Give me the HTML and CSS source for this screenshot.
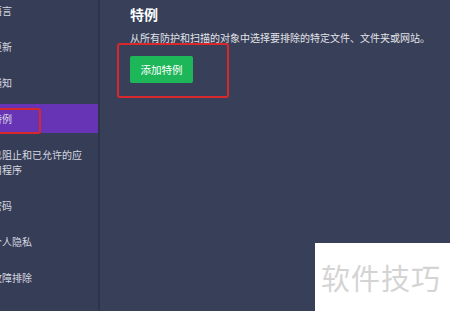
FILE: index.html
```html
<!DOCTYPE html>
<html lang="zh-CN">
<head>
<meta charset="UTF-8">
<title>特例</title>
<link rel="stylesheet" href="styles.css">
</head>
<body>
<div class="app">
  <div class="sidebar">
    <div class="nav-item">语言</div>
    <div class="nav-item">更新</div>
    <div class="nav-item">通知</div>
    <div class="nav-item active">特例</div>
    <div class="nav-item">已阻止和已允许的应<br>用程序</div>
    <div class="nav-item">密码</div>
    <div class="nav-item">个人隐私</div>
    <div class="nav-item">故障排除</div>
    <div class="mark mark-side"></div>
  </div>
  <div class="main">
    <h2 class="title">特例</h2>
    <p class="desc">从所有防护和扫描的对象中选择要排除的特定文件、文件夹或网站。</p>
    <button class="add-btn">添加特例</button>
    <div class="mark mark-main"></div>
  </div>
</div>
<div class="watermark">软件技巧</div>
</body>
</html>
```
FILE: styles.css
```css
body { margin: 0; background: #383f58; font-family: "Noto Sans CJK SC", "Noto Sans", sans-serif; overflow: hidden; }
.app { display: flex; height: 311px; }
.sidebar { position: relative; flex: 0 0 98px; background: #363d56; border-right: 2px solid #2e344a; display: flex; flex-direction: column; gap: 7px; margin-top: -4px; }
.nav-item { font-size: 10px; line-height: 15px; padding: 7px 0; margin-left: -8px; color: #d6d9e1; white-space: nowrap; }
.nav-item.active { background: #6834b6; margin-left: 0; text-indent: -8px; overflow: hidden; }
.main { position: relative; flex: 1; min-width: 0; padding: 5px 0 0 30px; }
.title { margin: 0; font-size: 14px; line-height: 18px; font-weight: bold; color: #ffffff; }
.desc { margin: 8px 0 10px 0; font-size: 10px; line-height: 14px; color: #e2e4ea; white-space: nowrap; }
.add-btn { width: 63px; height: 27px; border: none; border-radius: 2px; background: #1db75a; color: #ffffff; font-family: inherit; font-size: 10.5px; padding: 0; }
.mark { position: absolute; border: 2px solid #d9282c; border-radius: 3px; }
.mark-side { left: -10px; top: 112px; width: 47px; height: 22px; }
.mark-main { left: 17px; top: 43px; width: 108px; height: 51px; }
.watermark { position: absolute; left: 315px; top: 243px; width: 135px; height: 68px; background: #ffffff; color: #d4d4d4; font-size: 29px; line-height: 68px; padding-left: 6px; box-sizing: border-box; letter-spacing: 1px; }
```
